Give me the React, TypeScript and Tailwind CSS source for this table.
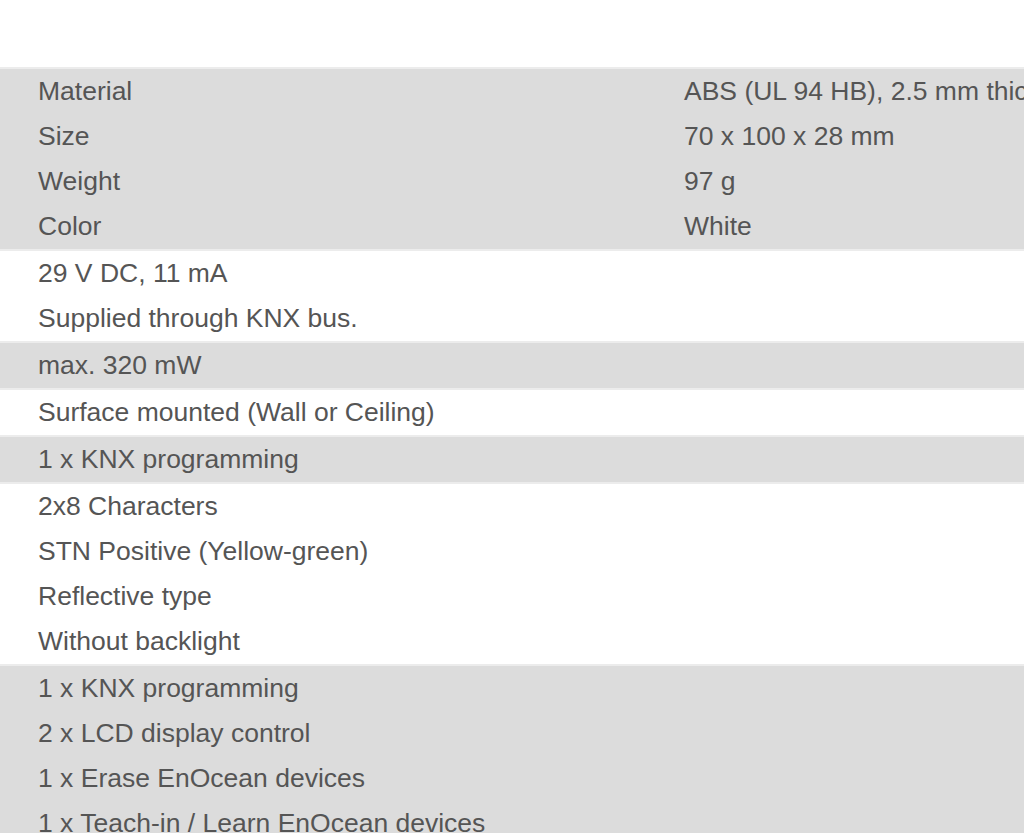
const groups: { shaded: boolean; label: string[]; value?: string[] }[] = [
  {
    shaded: true,
    label: ["Material", "Size", "Weight", "Color"],
    value: ["ABS (UL 94 HB), 2.5 mm thick", "70 x 100 x 28 mm", "97 g", "White"],
  },
  { shaded: false, label: ["29 V DC, 11 mA", "Supplied through KNX bus."] },
  { shaded: true, label: ["max. 320 mW"] },
  { shaded: false, label: ["Surface mounted (Wall or Ceiling)"] },
  { shaded: true, label: ["1 x KNX programming"] },
  {
    shaded: false,
    label: ["2x8 Characters", "STN Positive (Yellow-green)", "Reflective type", "Without backlight"],
  },
  {
    shaded: true,
    label: [
      "1 x KNX programming",
      "2 x LCD display control",
      "1 x Erase EnOcean devices",
      "1 x Teach-in / Learn EnOcean devices",
    ],
  },
]

export default function App() {
  return (
    <div className="h-[833px] w-[1024px] overflow-hidden bg-white pt-[67px] font-['Liberation_Sans',Arial,sans-serif] text-[26.5px] leading-[45px] text-[#555]">
      {groups.map((g, i) => (
        <div
          key={i}
          className={`grid grid-cols-[684px_1fr] border-t-2 border-[#ececec] ${g.shaded ? "bg-[#dcdcdc]" : "bg-white"}`}
        >
          <div className="pl-[38px]">
            {g.label.map((line) => (
              <div key={line} className="whitespace-nowrap">
                {line}
              </div>
            ))}
          </div>
          <div>
            {g.value?.map((line) => (
              <div key={line} className="whitespace-nowrap">
                {line}
              </div>
            ))}
          </div>
        </div>
      ))}
    </div>
  )
}
